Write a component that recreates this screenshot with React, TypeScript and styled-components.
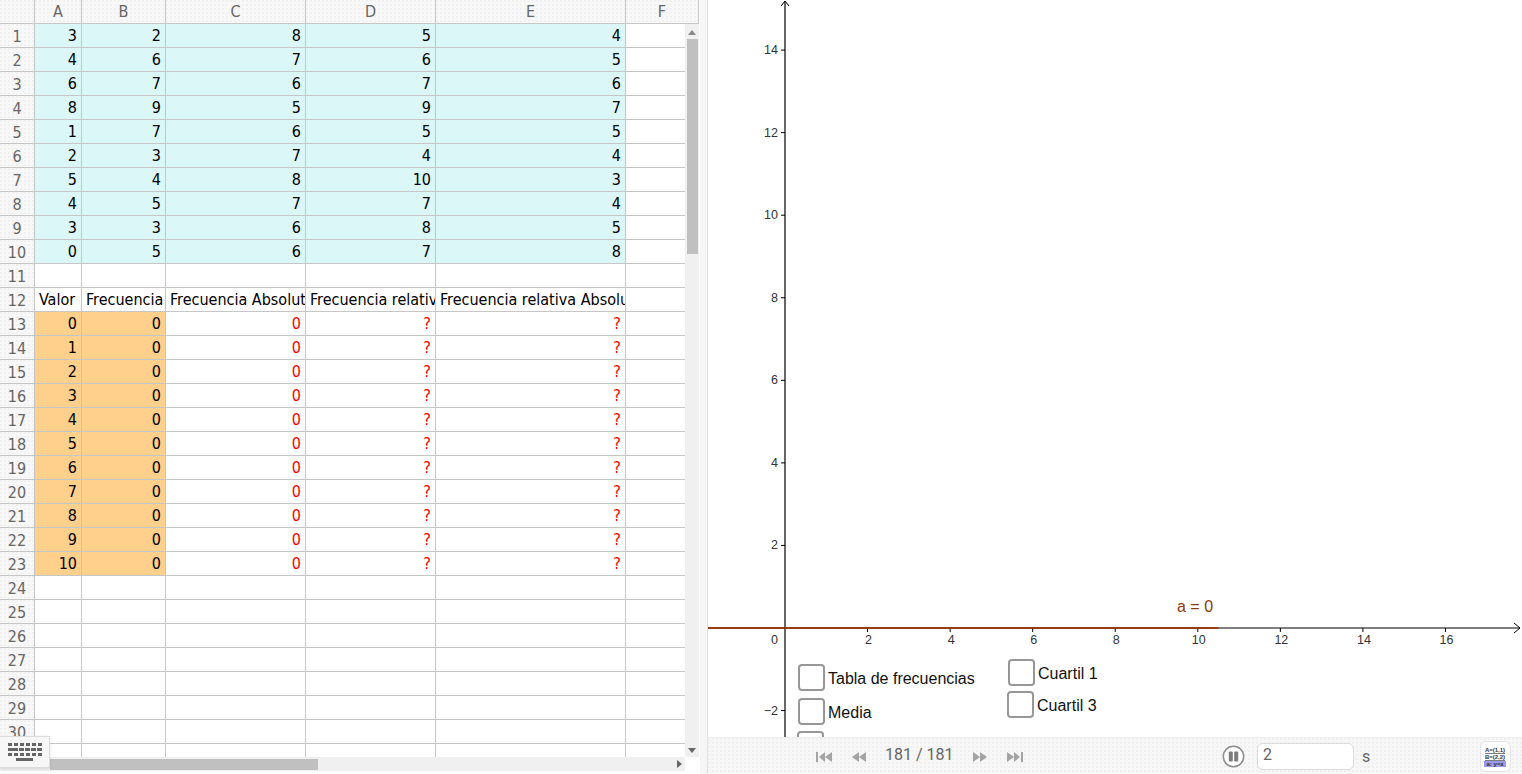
import React from "react";
import styled, { createGlobalStyle } from "styled-components";

const Global = createGlobalStyle`
  html, body { margin: 0; padding: 0; height: 100%; background: #fff; overflow: hidden; }
  #root { height: 100%; }
`;

const COLS = [47, 84, 140, 130, 190, 73];
const gridTemplate = `35px ${COLS.join("px ")}px`;
const dots = `radial-gradient(circle at 1px 1px, #ececec 0.6px, transparent 0.9px)`;

const Shell = styled.div`
  display: flex;
  width: 1522px;
  height: 774px;
  overflow: hidden;
  font-family: "DejaVu Sans Condensed", "DejaVu Sans", sans-serif;
`;
const SheetPanel = styled.section`
  position: relative;
  width: 699px;
  flex: none;
  display: flex;
  flex-direction: column;
  height: 771px;
`;
const HeaderRow = styled.div`
  display: grid;
  grid-template-columns: ${gridTemplate};
  height: 24px;
  flex: none;
`;
const ColHead = styled.div`
  box-sizing: border-box;
  display: flex;
  align-items: center;
  justify-content: center;
  background-color: #f8f8f8;
  background-image: ${dots};
  background-size: 4px 4px;
  border-right: 1px solid #c6c6c6;
  border-bottom: 1px solid #c6c6c6;
  color: #666;
  font-size: 16px;
  line-height: 23px;
  overflow: hidden;
`;
const SheetMiddle = styled.div`
  flex: 1;
  min-height: 0;
  display: flex;
`;
const GridArea = styled.div`
  width: 685px;
  flex: none;
  overflow: hidden;
`;
const Row = styled.div`
  display: grid;
  grid-template-columns: ${gridTemplate};
  height: 24px;
`;
const RowHead = styled(ColHead)`
  padding-top: 1px;
`;
const Cell = styled.div<{ $fill?: string; $text?: boolean; $red?: boolean }>`
  box-sizing: border-box;
  border-right: 1px solid #c6c6c6;
  border-bottom: 1px solid #c6c6c6;
  background: ${(p) => p.$fill || "#fff"};
  color: ${(p) => (p.$red ? "#ff0000" : "#000")};
  font-size: 16px;
  line-height: 24px;
  white-space: nowrap;
  overflow: hidden;
  text-align: ${(p) => (p.$text ? "left" : "right")};
  padding: ${(p) => (p.$text ? "0 0 0 4px" : "0 4px 0 0")};
`;
const VTrack = styled.div`
  position: relative;
  width: 14px;
  flex: none;
  background: #f0f0f0;
`;
const VThumb = styled.div`
  position: absolute;
  left: 2px;
  right: 1px;
  top: 15px;
  height: 215px;
  background: #c0c0c0;
`;
const ArrowUp = styled.div`
  position: absolute;
  top: 6px;
  left: 3px;
  border-left: 4px solid transparent;
  border-right: 4px solid transparent;
  border-bottom: 5px solid #8a8a8a;
`;
const ArrowDown = styled.div`
  position: absolute;
  bottom: 4px;
  left: 3px;
  border-left: 4px solid transparent;
  border-right: 4px solid transparent;
  border-top: 5px solid #666;
`;
const HScrollRow = styled.div`
  height: 14px;
  flex: none;
  display: flex;
`;
const HTrack = styled.div`
  position: relative;
  width: 685px;
  background: #f0f0f0;
`;
const HThumb = styled.div`
  position: absolute;
  left: 50px;
  top: 2px;
  bottom: 1px;
  width: 268px;
  background: #c0c0c0;
`;
const ArrowRight = styled.div`
  position: absolute;
  right: 3px;
  top: 3px;
  border-top: 4px solid transparent;
  border-bottom: 4px solid transparent;
  border-left: 5px solid #666;
`;
const KeyboardButton = styled.button`
  position: absolute;
  left: 0;
  top: 736px;
  width: 50px;
  height: 32px;
  padding: 0;
  display: flex;
  align-items: center;
  justify-content: center;
  background: #f7f7f7;
  border: 1px solid #dcdcdc;
  border-left: none;
  box-shadow: 0 1px 3px rgba(0, 0, 0, 0.12);
`;
const Divider = styled.div`
  width: 9px;
  flex: none;
  box-sizing: border-box;
  background: #f6f6f6;
  border-left: 1px solid #fff;
  border-right: 1px solid #e2e2e2;
`;
const GraphPanel = styled.section`
  flex: 1;
  min-width: 0;
  display: flex;
  flex-direction: column;
`;
const Canvas = styled.div`
  position: relative;
  flex: 1;
  min-height: 0;
  overflow: hidden;
  background: #fff;
`;
const Plot = styled.svg`
  display: block;
`;
const AxisLabel = styled.text`
  font-family: "Liberation Sans", Arial, sans-serif;
  font-size: 12.5px;
  fill: #333;
`;
const SliderLabel = styled.text`
  font-family: "Liberation Sans", Arial, sans-serif;
  font-size: 16px;
  fill: #8a3a0c;
`;
const CheckRow = styled.label<{ $x: number; $y: number }>`
  position: absolute;
  left: ${(p) => p.$x}px;
  top: ${(p) => p.$y}px;
  display: flex;
  align-items: center;
  gap: 3.5px;
  font-family: "Liberation Sans", Arial, sans-serif;
  font-size: 16px;
  color: #111;
  white-space: nowrap;
`;
const CheckText = styled.span`
  padding-top: 2px;
`;
const Box = styled.span`
  box-sizing: border-box;
  width: 27px;
  height: 27px;
  background: #fff;
  border: 2px solid #979797;
  border-radius: 4px;
`;
const PlayBar = styled.footer`
  height: 37px;
  flex: none;
  box-sizing: border-box;
  display: flex;
  align-items: center;
  padding: 1px 11px 0 107px;
  background-color: #f7f7f7;
  background-image: ${dots};
  background-size: 4px 4px;
  border-top: 1px solid #eeeeee;
  font-family: Roboto, sans-serif;
  color: #666;
  font-size: 16px;
`;
const Transport = styled.div`
  display: flex;
  align-items: center;
  gap: 18px;
`;
const Counter = styled.span`
  width: 69px;
  white-space: nowrap;
  position: relative;
  top: -2px;
`;
const SpeedGroup = styled.div`
  display: flex;
  align-items: center;
  margin-left: 198px;
`;
const SpeedBox = styled.div`
  box-sizing: border-box;
  width: 97px;
  height: 27px;
  margin-left: 12px;
  padding-left: 5px;
  line-height: 22px;
  background: #fff;
  border: 1px solid #dcdcdc;
  border-radius: 6px;
`;
const Unit = styled.span`
  margin-left: 8px;
`;
const TableButton = styled.button`
  margin-left: auto;
  box-sizing: border-box;
  width: 31px;
  height: 31px;
  padding: 0;
  display: flex;
  align-items: center;
  justify-content: center;
  background: #fff;
  border: 1px solid #e4e4e4;
  border-radius: 6px;
`;
const TinyText = styled.text`
  font-family: "Liberation Sans", Arial, sans-serif;
  font-size: 6px;
  font-weight: 700;
  fill: #333;
`;

const top = [
  [3, 2, 8, 5, 4],
  [4, 6, 7, 6, 5],
  [6, 7, 6, 7, 6],
  [8, 9, 5, 9, 7],
  [1, 7, 6, 5, 5],
  [2, 3, 7, 4, 4],
  [5, 4, 8, 10, 3],
  [4, 5, 7, 7, 4],
  [3, 3, 6, 8, 5],
  [0, 5, 6, 7, 8],
];
const heads = ["Valor", "Frecuencia", "Frecuencia Absoluta", "Frecuencia relativa", "Frecuencia relativa Absoluta"];
const CYAN = "#dbf7f8";
const ORANGE = "#ffcf8c";

function renderRow(n: number) {
  let cells: React.ReactNode;
  if (n <= 10) {
    cells = (
      <>
        {top[n - 1].map((v, i) => (
          <Cell key={i} $fill={CYAN}>{v}</Cell>
        ))}
        <Cell />
      </>
    );
  } else if (n === 12) {
    cells = (
      <>
        {heads.map((h) => (
          <Cell key={h} $text>{h}</Cell>
        ))}
        <Cell />
      </>
    );
  } else if (n >= 13 && n <= 23) {
    cells = (
      <>
        <Cell $fill={ORANGE}>{n - 13}</Cell>
        <Cell $fill={ORANGE}>0</Cell>
        <Cell $red>0</Cell>
        <Cell $red>?</Cell>
        <Cell $red>?</Cell>
        <Cell />
      </>
    );
  } else {
    cells = COLS.map((_, i) => <Cell key={i} />);
  }
  return (
    <Row key={n}>
      <RowHead>{n <= 30 ? n : null}</RowHead>
      {cells}
    </Row>
  );
}

const OX = 77;
const OY = 628;
const U = 41.28;
const xVals = [2, 4, 6, 8, 10, 12, 14, 16];
const yVals = [2, 4, 6, 8, 10, 12, 14];

const Graph = () => (
  <Plot width={814} height={737} viewBox="0 0 814 737">
    <line x1={OX} y1={1} x2={OX} y2={737} stroke="#000" strokeWidth={1.2} />
    <line x1={0} y1={OY} x2={812} y2={OY} stroke="#000" strokeWidth={1.2} />
    <path d={`M${OX - 4} 6 L${OX} 1 L${OX + 4} 6`} fill="none" stroke="#000" />
    <path d={`M806 ${OY - 5} L812 ${OY} L806 ${OY + 5}`} fill="none" stroke="#000" />
    {xVals.map((v) => (
      <g key={v}>
        <line x1={OX + v * U} y1={OY} x2={OX + v * U} y2={OY + 4} stroke="#000" />
        <AxisLabel x={OX + v * U + 1} y={OY + 16} textAnchor="middle">{v}</AxisLabel>
      </g>
    ))}
    {yVals.map((v) => (
      <g key={v}>
        <line x1={OX - 4} y1={OY - v * U} x2={OX} y2={OY - v * U} stroke="#000" />
        <AxisLabel x={OX - 7} y={OY - v * U + 4} textAnchor="end">{v}</AxisLabel>
      </g>
    ))}
    <line x1={OX - 4} y1={OY + 2 * U} x2={OX} y2={OY + 2 * U} stroke="#000" />
    <AxisLabel x={OX - 7} y={OY + 2 * U + 4} textAnchor="end">−2</AxisLabel>
    <AxisLabel x={OX - 7} y={OY + 16} textAnchor="end">0</AxisLabel>
    <line x1={0} y1={OY} x2={OX + 10.5 * U} y2={OY} stroke="#993300" strokeWidth={2} opacity={0.85} />
    <SliderLabel x={469} y={612}>a = 0</SliderLabel>
  </Plot>
);

const Tri = ({ d, w = 18 }: { d: string; w?: number }) => (
  <svg width={w} height={14} viewBox={`0 0 ${w} 14`}>
    <path d={d} fill="#a4a4a4" />
  </svg>
);

const KeyboardIcon = () => {
  const rows = [
    { y: 0, xs: [0, 6, 12, 18, 24, 30], w: 4 },
    { y: 5, xs: [0, 5, 11, 17, 23, 29], w: 5 },
    { y: 10, xs: [0, 6, 12, 18, 24, 30], w: 4 },
  ];
  return (
    <svg width={34} height={19} viewBox="0 0 34 19">
      {rows.map((r) =>
        r.xs.map((x) => <rect key={`${r.y}-${x}`} x={x} y={r.y} width={r.w} height={3} fill="#666" />)
      )}
      <rect x={8} y={15} width={17} height={3} fill="#666" />
    </svg>
  );
};

export default function App() {
  const rows = Array.from({ length: 31 }, (_, i) => i + 1);
  return (
    <>
      <Global />
      <Shell>
        <SheetPanel>
          <HeaderRow>
            <ColHead />
            {["A", "B", "C", "D", "E", "F"].map((c) => (
              <ColHead key={c}>{c}</ColHead>
            ))}
          </HeaderRow>
          <SheetMiddle>
            <GridArea>{rows.map(renderRow)}</GridArea>
            <VTrack>
              <ArrowUp />
              <VThumb />
              <ArrowDown />
            </VTrack>
          </SheetMiddle>
          <HScrollRow>
            <HTrack>
              <HThumb />
              <ArrowRight />
            </HTrack>
          </HScrollRow>
          <KeyboardButton aria-label="Teclado">
            <KeyboardIcon />
          </KeyboardButton>
        </SheetPanel>
        <Divider />
        <GraphPanel>
          <Canvas>
            <Graph />
            <CheckRow $x={89.5} $y={664}><Box /><CheckText>Tabla de frecuencias</CheckText></CheckRow>
            <CheckRow $x={89.5} $y={698}><Box /><CheckText>Media</CheckText></CheckRow>
            <CheckRow $x={88.5} $y={731}><Box /></CheckRow>
            <CheckRow $x={299.5} $y={659}><Box /><CheckText>Cuartil 1</CheckText></CheckRow>
            <CheckRow $x={298.5} $y={691}><Box /><CheckText>Cuartil 3</CheckText></CheckRow>
          </Canvas>
          <PlayBar>
            <Transport>
              <Tri d="M1 2h2v10H1zM10 2v10L4 7zM17 2v10l-7-5z" />
              <Tri w={16} d="M8 2v10L1 7zM15 2v10L8 7z" />
              <Counter>181 / 181</Counter>
              <Tri w={16} d="M1 2v10l7-5zM8 2v10l7-5z" />
              <Tri d="M1 2v10l7-5zM8 2v10l6-5zM15 2h2v10h-2z" />
            </Transport>
            <SpeedGroup>
              <svg width={23} height={23} viewBox="0 0 23 23">
                <circle cx={11.5} cy={11.5} r={10.2} fill="#fff" stroke="#8e8e8e" strokeWidth={1.6} />
                <rect x={6.8} y={6.5} width={4} height={10} rx={1} fill="#7c7c7c" />
                <rect x={12.2} y={6.5} width={4} height={10} rx={1} fill="#7c7c7c" />
              </svg>
              <SpeedBox>2</SpeedBox>
              <Unit>s</Unit>
            </SpeedGroup>
            <TableButton aria-label="Tabla">
              <svg width={23} height={22} viewBox="0 0 23 22">
                <rect x={0} y={15} width={22} height={6} fill="#9a9af0" />
                <TinyText x={11} y={6} textAnchor="middle">A=(1,1)</TinyText>
                <line x1={1} y1={7.5} x2={21} y2={7.5} stroke="#444" strokeWidth={0.7} />
                <TinyText x={11} y={13} textAnchor="middle">B=(2,2)</TinyText>
                <line x1={1} y1={14.5} x2={21} y2={14.5} stroke="#444" strokeWidth={0.7} />
                <TinyText x={11} y={20} textAnchor="middle">a: y=x</TinyText>
              </svg>
            </TableButton>
          </PlayBar>
        </GraphPanel>
      </Shell>
    </>
  );
}
